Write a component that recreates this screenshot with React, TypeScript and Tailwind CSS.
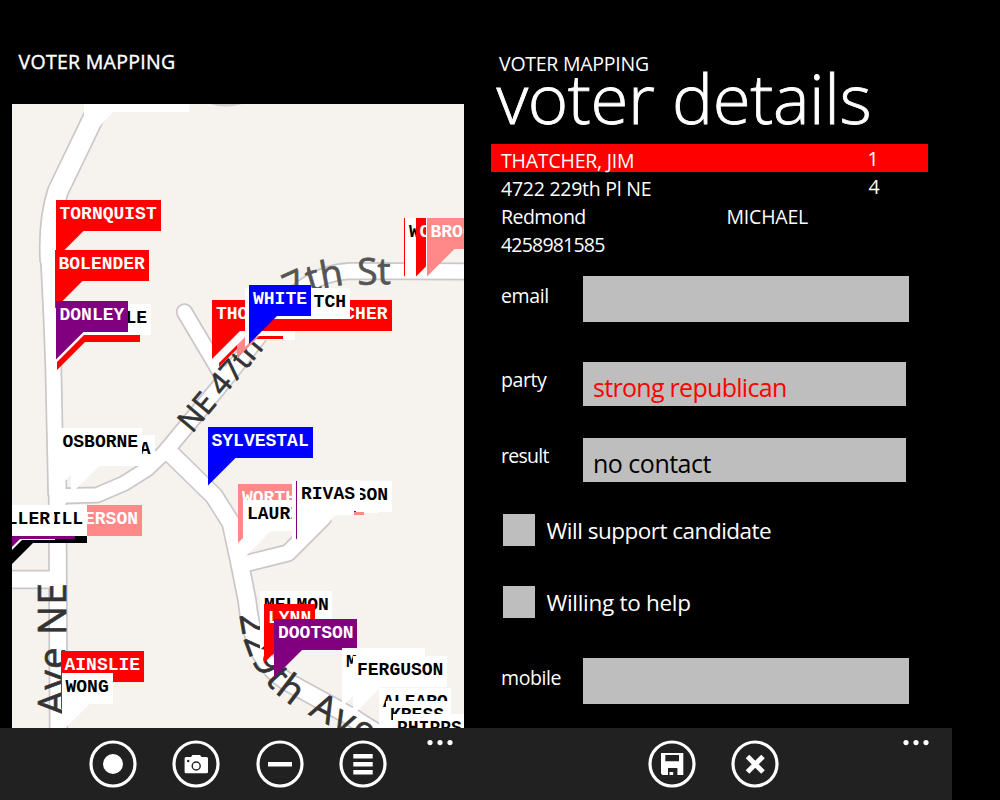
import type { ReactNode } from "react";

const MAP_X = 12;
const MAP_Y = 104;

type Tone = "red" | "blue" | "purple" | "pink" | "white" | "black";

const TONES: Record<Tone, { box: string; text: string }> = {
  red: { box: "bg-[#ff0000]", text: "text-white" },
  blue: { box: "bg-[#0000ff]", text: "text-white" },
  purple: { box: "bg-[#800080]", text: "text-white" },
  pink: { box: "bg-[#ff8989]", text: "text-white" },
  white: { box: "bg-white", text: "text-black" },
  black: { box: "bg-black", text: "text-white" },
};

interface PinData {
  x: number;
  y: number;
  w: number;
  tone: Tone;
  label?: string;
  end?: boolean;
  flat?: boolean;
}

// Listed back to front: later pins cover earlier ones.
const PINS: PinData[] = [
  { x: 55.5, y: 200, w: 105, tone: "red", label: "TORNQUIST" },
  { x: 54.5, y: 250, w: 94.5, tone: "red", label: "BOLENDER" },
  { x: 57, y: 311, w: 83, tone: "red" },
  { x: 56, y: 304, w: 95, tone: "white", label: "LE", end: true },
  { x: 55.5, y: 301, w: 72.5, tone: "purple", label: "DONLEY" },

  { x: 71, y: 435, w: 83.5, tone: "white", label: "A", end: true },
  { x: 58.5, y: 428, w: 83, tone: "white", label: "OSBORNE" },

  { x: 5, y: 512, w: 82, tone: "black" },
  { x: -6, y: 509, w: 61, tone: "white" },
  { x: -8, y: 508, w: 82.5, tone: "purple" },
  { x: 70, y: 505, w: 72, tone: "pink", label: "ERSON", end: true, flat: true },
  { x: 30, y: 505, w: 57, tone: "white", label: "ILL", end: true, flat: true },
  { x: -40, y: 505, w: 94, tone: "white", label: "LLER", end: true },

  { x: 60.5, y: 651, w: 83.5, tone: "red", label: "AINSLIE" },
  { x: 61.5, y: 673, w: 51.5, tone: "white", label: "WONG" },

  { x: 218, y: 309, w: 76.5, tone: "white" },
  { x: 219, y: 308, w: 64, tone: "red" },
  { x: 237, y: 299.5, w: 60, tone: "pink" },
  { x: 217, y: 306, w: 40, tone: "white" },
  { x: 250, y: 305, w: 44.5, tone: "white", flat: true },
  { x: 212, y: 300, w: 105, tone: "red", label: "THO" },
  { x: 297, y: 300, w: 94.5, tone: "red", label: "CHER", end: true, flat: true },
  { x: 245, y: 288, w: 17, tone: "white" },
  { x: 262, y: 300, w: 40, tone: "red", flat: true },
  { x: 245, y: 288, w: 105, tone: "white", label: "TCH", end: true, flat: true },
  { x: 249, y: 285, w: 62, tone: "blue", label: "WHITE" },

  { x: 403.5, y: 218, w: 60, tone: "red" },
  { x: 411, y: 218, w: 60, tone: "white" },
  { x: 405, y: 218, w: 60, tone: "white", label: "W" },
  { x: 415.5, y: 218, w: 60, tone: "red", label: "C" },
  { x: 425.5, y: 218, w: 60, tone: "white" },
  { x: 426.5, y: 218, w: 60, tone: "pink", label: "BROO" },

  { x: 207.5, y: 427, w: 105, tone: "blue", label: "SYLVESTAL" },

  { x: 238, y: 484, w: 62, tone: "pink", label: "WORTH" },
  { x: 243, y: 500, w: 60, tone: "white", label: "LAURI" },
  { x: 292, y: 481, w: 60, tone: "white" },
  { x: 310, y: 482, w: 68, tone: "white" },
  { x: 310, y: 484, w: 54, tone: "pink", flat: true },
  { x: 300, y: 481, w: 92, tone: "white", label: "SON", end: true },
  { x: 295.5, y: 481, w: 60, tone: "purple" },
  { x: 298, y: 484, w: 56, tone: "white" },
  { x: 297, y: 480, w: 63, tone: "white", label: "RIVAS" },

  { x: 260, y: 591, w: 72, tone: "white", label: "MELMON" },
  { x: 264, y: 604, w: 51, tone: "red", label: "LYNN" },
  { x: 274, y: 619, w: 83, tone: "purple", label: "DOOTSON" },

  { x: 342, y: 648, w: 83, tone: "white", label: "M" },
  { x: 353, y: 656, w: 94, tone: "white", label: "FERGUSON" },
  { x: 379, y: 688, w: 72, tone: "white", label: "ALFARO" },
  { x: 386, y: 701, w: 62, tone: "white", label: "KRESS" },
  { x: 393, y: 714, w: 72, tone: "white", label: "PHIPPS" },
];

function Pin({ x, y, w, tone, label, end, flat }: PinData) {
  const t = TONES[tone];
  return (
    <div className="absolute" style={{ left: x - MAP_X, top: y - MAP_Y, width: w }}>
      <div
        className={`flex h-[31px] overflow-hidden px-[4px] font-['Liberation_Mono',monospace] text-[18px] leading-[29px] font-bold whitespace-nowrap ${end ? "justify-end" : ""} ${t.box} ${t.text}`}
      >
        {label}
      </div>
      {!flat && (
        <div className={`-mt-px h-[29px] w-[29px] [clip-path:polygon(0_0,100%_0,0_100%)] ${t.box}`} />
      )}
    </div>
  );
}

const ROADS: { d: string; w: number; round?: boolean }[] = [
  { d: "M106,92 L100,104 L58,191 C51,212 49,235 50.5,262", w: 19 },
  { d: "M57.5,480 L58.5,735", w: 16 },
  { d: "M8,579.5 L58,579.5", w: 16 },
  { d: "M58,496 L97,495 L124,483.5 L147,469 L166,451", w: 13.5 },
  { d: "M161,457 L223,382 L270,322 C295,290 315,273 350,271 L470,271.5", w: 14.5 },
  { d: "M184.5,312 L220,372", w: 14, round: true },
  { d: "M169,452 L214,496 L231,523 L239,560 L247,600 C251,640 262,665 286,681 L350,716 L380,735", w: 16.5 },
  { d: "M244,564 L288,553 L323,518", w: 15, round: true },
];

// The avenue narrows southwards, so this stretch is an outline instead of a stroke.
const TAPER = "M41.3,255 L44.5,320 L46.3,370 L49,495 H63 L60.5,370 L60,255 Z";

function StreetMap() {
  return (
    <svg className="block h-full w-full" viewBox="12 104 452 624">
      <rect x="12" y="104" width="452" height="624" fill="#f6f3ee" />
      <g fill="none" stroke="#cbc6ca" strokeLinejoin="round">
        <path d={TAPER} strokeWidth="3.4" />
        {ROADS.map((r) => (
          <path key={r.d} d={r.d} strokeWidth={r.w + 3.4} strokeLinecap={r.round ? "round" : "butt"} />
        ))}
      </g>
      <path d={TAPER} fill="#ffffff" />
      <g fill="none" stroke="#ffffff" strokeLinejoin="round">
        {ROADS.map((r) => (
          <path key={r.d} d={r.d} strokeWidth={r.w} strokeLinecap={r.round ? "round" : "butt"} />
        ))}
      </g>
      <path d="M84,104 H189.5 V112 H113 L100,126 L84,117 Z" fill="#ffffff" />
      <path d="M210,104 Q226,109 242,104 Z" fill="#d5cfd2" />
      <path id="curve-47th" d="M258,330 C280,304 300,291 342,285 L391,284" fill="none" />
      <path id="curve-229th" d="M240,615 C243,655 264,692 302,711 L410,768" fill="none" />
      <g
        fill="#333333"
        stroke="#333333"
        strokeWidth="0.7"
        fontFamily="'Open Sans','Noto Sans',sans-serif"
      >
        <text transform="translate(192 434) rotate(-50)" fontSize="30.5">
          NE 47th
        </text>
        <text fontSize="37" fill="#555555" stroke="#555555" wordSpacing="3">
          <textPath href="#curve-47th" startOffset="100%" textAnchor="end">
            7th St
          </textPath>
        </text>
        <text transform="translate(66 715) rotate(-90)" fontSize="38.5" letterSpacing="1.2">
          Ave NE
        </text>
        <text fontSize="37" letterSpacing="2.4" wordSpacing="3">
          <textPath href="#curve-229th">229th Ave</textPath>
        </text>
      </g>
    </svg>
  );
}

function RoundButton({ label, children }: { label: string; children: ReactNode }) {
  return (
    <button aria-label={label} className="mt-[12px] h-[48px] w-[48px] shrink-0">
      <svg viewBox="0 0 48 48" className="block h-[48px] w-[48px]">
        <circle cx="24" cy="24" r="22" fill="none" stroke="#fff" strokeWidth="3.2" />
        {children}
      </svg>
    </button>
  );
}

function Dots() {
  return (
    <svg viewBox="0 0 26 6" className="mt-[12px] block h-[6px] w-[26px] shrink-0" fill="#fff">
      <circle cx="3" cy="2.6" r="2.6" />
      <circle cx="13" cy="2.6" r="2.6" />
      <circle cx="23" cy="2.6" r="2.6" />
    </svg>
  );
}

function Row({ label, value, text, children }: { label: string; value: string; text: string; children?: ReactNode }) {
  return (
    <div className={`flex ${value}`}>
      <div className={`w-[82px] shrink-0 text-[19.5px] ${text}`}>{label}</div>
      {children}
    </div>
  );
}

function Check({ label, tracking }: { label: string; tracking: string }) {
  return (
    <label className="flex h-[32px]">
      <span className="ml-[2px] h-[32px] w-[32px] bg-[#bebebe]" />
      <span className={`ml-[11.5px] text-[22.5px] leading-[34px] ${tracking}`}>{label}</span>
    </label>
  );
}

export default function App() {
  return (
    <div className="flex h-[800px] w-[1000px] flex-col overflow-hidden bg-black font-['Open_Sans','Noto_Sans',sans-serif] text-white">
      <div className="flex h-[728px]">
        <section className="flex w-[476px] flex-col pl-[12px]">
          <h1 className="h-[104px] pt-[47px] pl-[6.5px] text-[19.5px] leading-[30px] tracking-[0.3px] [-webkit-text-stroke:0.4px_white]">
            VOTER MAPPING
          </h1>
          <div className="relative h-[624px] w-[452px] overflow-hidden">
            <StreetMap />
            {PINS.map((p, i) => (
              <Pin key={i} {...p} />
            ))}
          </div>
        </section>

        <section className="flex w-[476px] flex-col pl-[15px]">
          <header className="h-[144px] pt-[49px]">
            <div className="pl-[8px] text-[19.5px] leading-[30px] tracking-[-0.25px]">VOTER MAPPING</div>
            <h2 className="-mt-[26px] pl-[5.5px] text-[69px] leading-[88px] font-light tracking-[-0.4px] whitespace-nowrap [-webkit-text-stroke:0.8px_white]">
              voter details
            </h2>
          </header>

          <div className="flex w-[437px] flex-col text-[19.5px] whitespace-nowrap">
            <div className="flex h-[28px] bg-[#ff0000] pl-[10px]">
              <span className="w-[366.5px] leading-[34px] tracking-[-0.2px]">THATCHER, JIM</span>
              <span className="leading-[30px]">1</span>
            </div>
            <div className="flex h-[28px] pl-[10px]">
              <span className="w-[367.5px] leading-[34px] tracking-[-0.25px]">4722 229th Pl NE</span>
              <span className="leading-[30px]">4</span>
            </div>
            <div className="flex h-[28px] pl-[10px] leading-[34px]">
              <span className="w-[225.5px] tracking-[-0.55px]">Redmond</span>
              <span className="tracking-[-0.2px]">MICHAEL</span>
            </div>
            <div className="h-[28px] pl-[10px] leading-[34px] tracking-[-0.8px]">4258981585</div>
          </div>

          <form className="flex flex-col pt-[20px] pl-[10px]">
            <Row label="email" value="h-[46px]" text="leading-[40px] tracking-[-0.4px]">
              <div className="h-[46px] w-[326px] bg-[#bebebe]" />
            </Row>
            <Row label="party" value="mt-[40px] h-[44px]" text="leading-[36px] tracking-[-0.4px]">
              <div className="h-[44px] w-[323px] bg-[#bebebe] pl-[10px] text-[25px] leading-[50px] tracking-[-0.7px] text-[#ff0000]">
                strong republican
              </div>
            </Row>
            <Row label="result" value="mt-[32px] h-[44px]" text="leading-[36px] tracking-[-0.7px]">
              <div className="h-[44px] w-[323px] bg-[#bebebe] pl-[10px] text-[25px] leading-[50px] tracking-[-0.5px] text-black">
                no contact
              </div>
            </Row>
            <div className="mt-[32px] flex flex-col gap-[40px]">
              <Check label="Will support candidate" tracking="tracking-[-0.5px]" />
              <Check label="Willing to help" tracking="tracking-[-0.3px]" />
            </div>
            <Row label="mobile" value="mt-[40px] h-[46px]" text="leading-[40px] tracking-[-0.4px]">
              <div className="h-[46px] w-[326px] bg-[#bebebe]" />
            </Row>
          </form>
        </section>
      </div>

      <footer className="flex h-[72px] w-[952px] bg-[#212121]">
        <div className="flex w-[476px] items-start pl-[89px]">
          <div className="flex gap-[35.4px]">
            <RoundButton label="Locate">
              <circle cx="24" cy="24" r="10" fill="#fff" />
            </RoundButton>
            <RoundButton label="Camera">
              <path
                d="M14,17 H19 L20.5,15 H28 L29.5,17 H34.5 Q36,17 36,18.5 V32 Q36,33.3 34.5,33.3 H14 Q12.6,33.3 12.6,32 V18.5 Q12.6,17 14,17 Z"
                fill="#fff"
              />
              <circle cx="24.2" cy="26" r="4" fill="none" stroke="#212121" strokeWidth="1.4" />
              <circle cx="16.2" cy="21" r="1.2" fill="#212121" />
            </RoundButton>
            <RoundButton label="Remove">
              <rect x="12" y="22" width="24" height="4.5" fill="#fff" />
            </RoundButton>
            <RoundButton label="List">
              <path d="M14.3,14 h19.4 v4.4 h-19.4 Z M14.3,22 h19.4 v4.4 h-19.4 Z M14.3,30 h19.4 v4.4 h-19.4 Z" fill="#fff" />
            </RoundButton>
          </div>
          <div className="ml-[40px]">
            <Dots />
          </div>
        </div>
        <div className="flex w-[476px] items-start pl-[171.5px]">
          <div className="flex gap-[35.4px]">
            <RoundButton label="Save">
              <path
                fillRule="evenodd"
                d="M13,13 H35.3 V35 H29.4 V28 H20 V35 H14.5 L13,33.5 Z M17.3,15 V21.3 H31 V15 Z M21.5,32 H25.2 V35 H21.5 Z"
                fill="#fff"
              />
            </RoundButton>
            <RoundButton label="Cancel">
              <path d="M16.5,16.5 L32,32 M32,16.5 L16.5,32" stroke="#fff" strokeWidth="5" fill="none" />
            </RoundButton>
          </div>
          <div className="ml-[124px]">
            <Dots />
          </div>
        </div>
      </footer>
    </div>
  );
}
